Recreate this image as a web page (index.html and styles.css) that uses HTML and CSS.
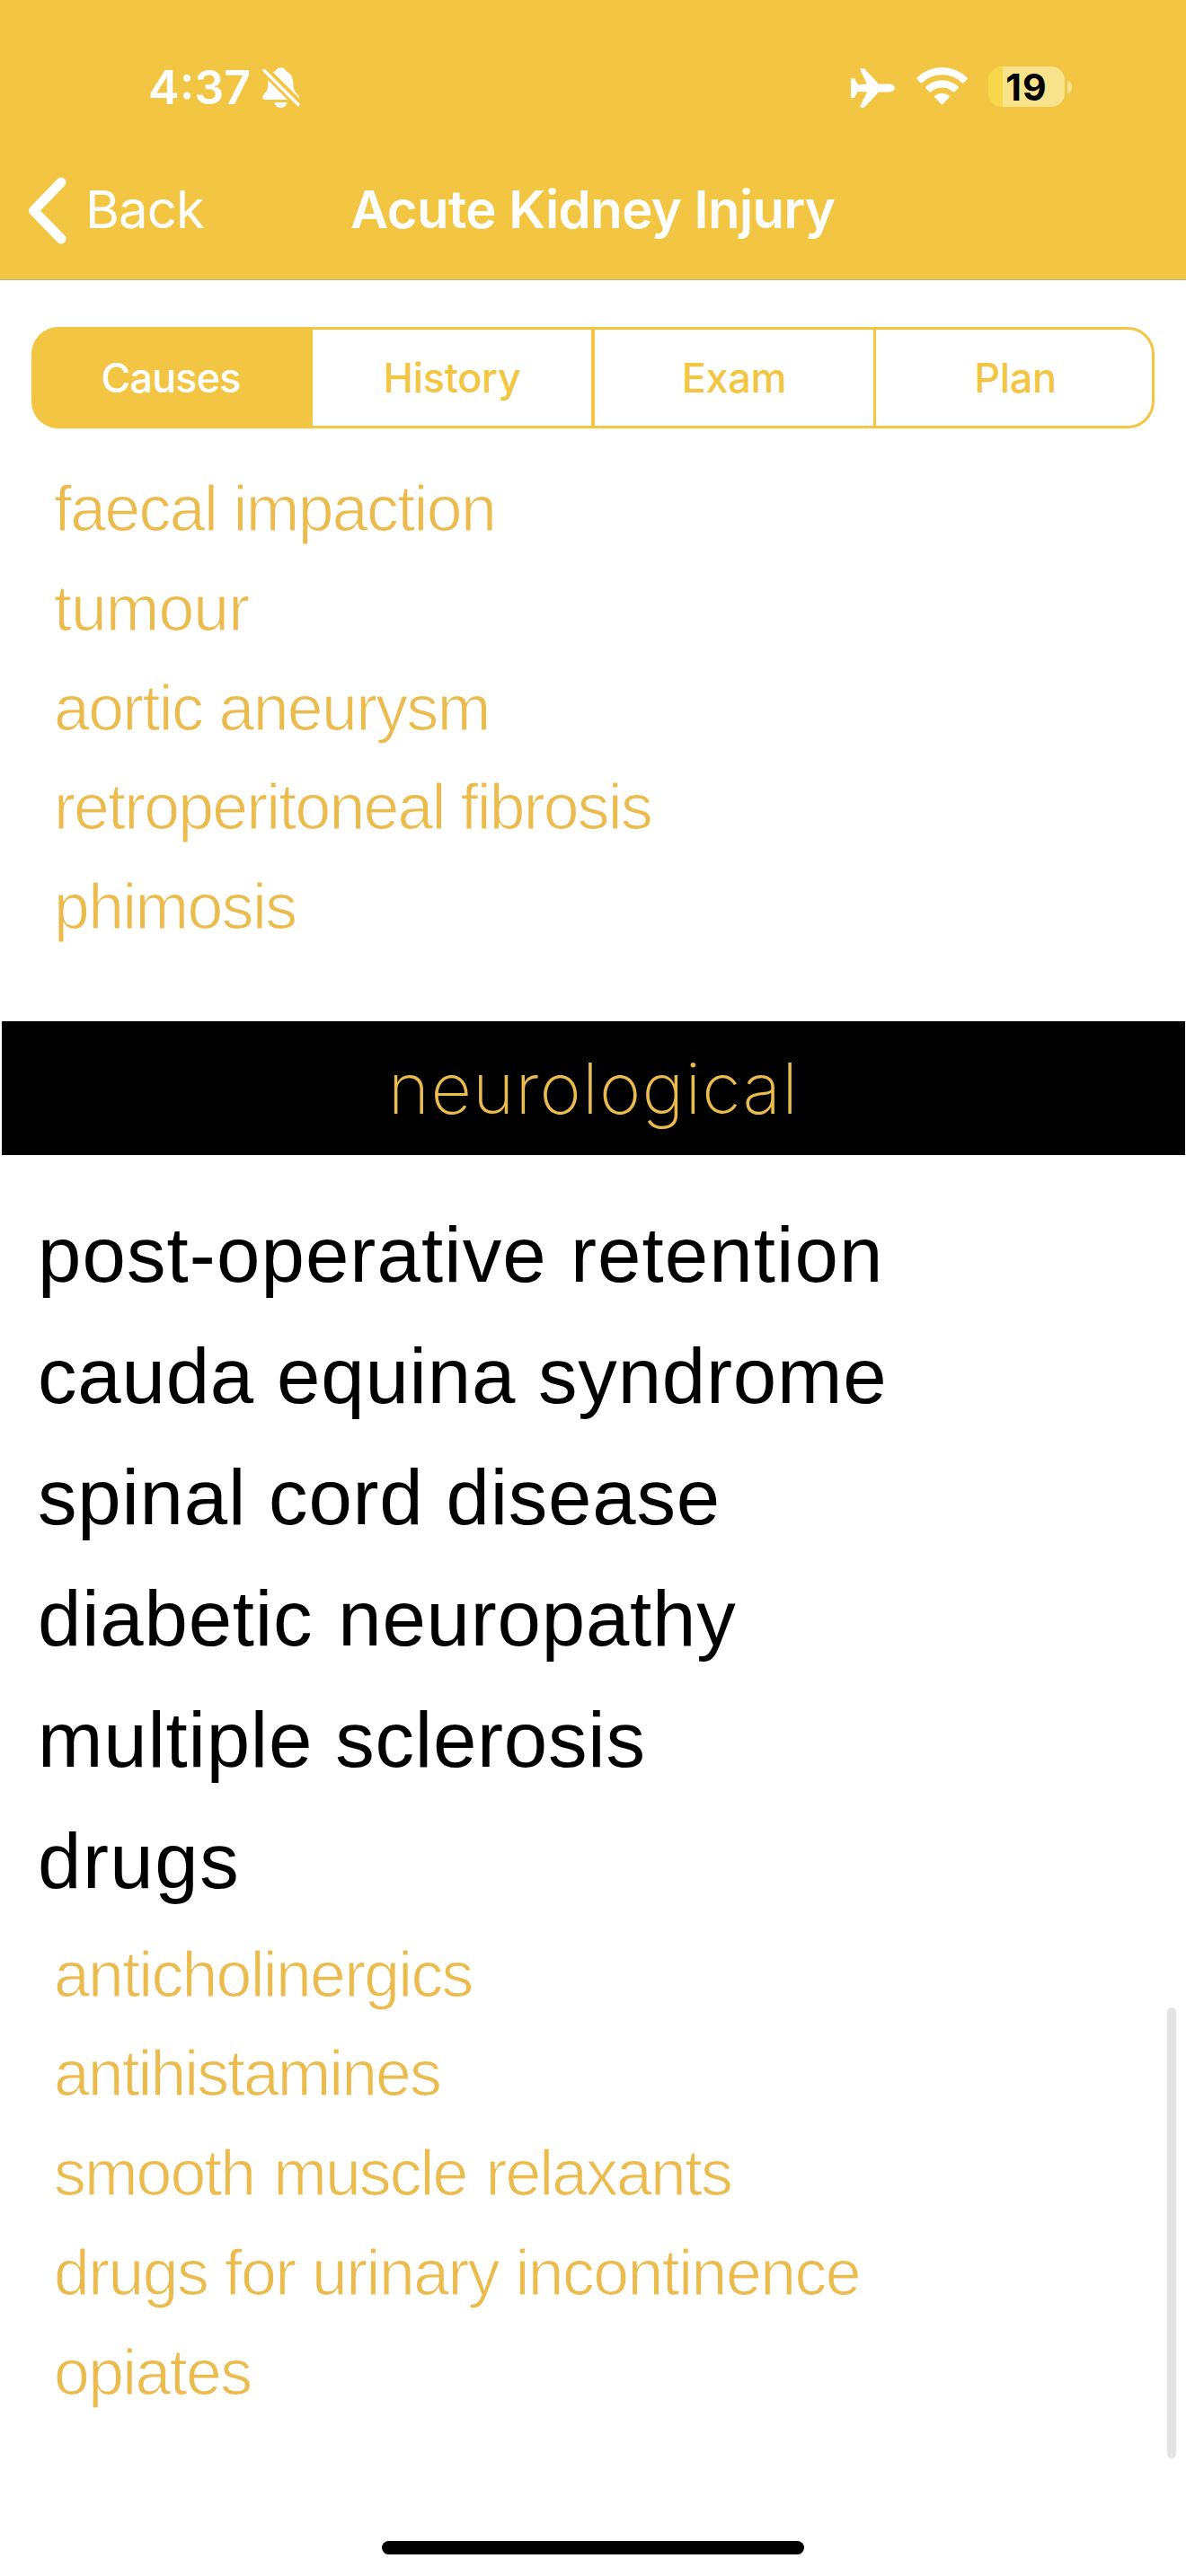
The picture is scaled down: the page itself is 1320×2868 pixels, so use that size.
FILE: index.html
```html
<!DOCTYPE html>
<html lang="en">
<head>
<meta charset="utf-8">
<title>Acute Kidney Injury</title>
<link rel="stylesheet" href="styles.css">
</head>
<body>
<header class="header">
  <div class="status">
    <div class="status-left">
      <span class="time">4:37</span>
      <svg class="bell" viewBox="0 0 42 45" width="42" height="45" aria-hidden="true">
        <path fill="#fff" d="M12 5.5C14 4.8 15 3.5 15.600 2.600C16.800 1 18.500 .2 20.500 .2S24.200 1 25.400 2.600C26.200 3.900 27 4.700 28.500 5.500C32.500 8 34 12.500 34.300 17.500C34.600 23 35 25.500 37.500 28.500C39.500 30.800 41.200 32 41.200 34.300L41 34.600Z"/>
        <path fill="#fff" d="M6.500 14.500L28 36H3.500C1.400 36 .3 35 .3 33.200C.3 31 2.500 29.500 4 27.500C6 25 6.300 21 6.500 14.500Z"/>
        <path fill="#fff" d="M13.500 39H27.500C27 42.500 24.200 44.800 20.500 44.800S14 42.500 13.500 39Z"/>
        <path stroke="#fff" stroke-width="3.400" stroke-linecap="round" d="M2 3.500L40 41.500"/>
      </svg>
    </div>
    <div class="status-right">
      <svg class="plane" viewBox="0 0 49 44" width="49" height="44" aria-hidden="true">
        <path fill="#fff" d="M0 11.500Q0 11 .6 11H2.800Q3.700 11 4.300 11.900L8 18.200L18 17.600L10.500 2Q9.800 .3 11.600 .3H14Q15 .3 15.800 1.200L31 17.600H41.500C46 17.600 48.900 19.700 48.900 22S46 26.500 41.500 26.500H31L15.800 42.800Q15 43.700 14 43.700H11.600Q9.800 43.700 10.500 42L18 26.500L8 25.800L4.300 32.100Q3.700 33 2.800 33H.6Q0 33 0 32.500Z"/>
      </svg>
      <svg class="wifi" viewBox="0 0 57 42" width="57" height="42" aria-hidden="true">
        <path fill="#fff" d="M.6 11.600A39.500 39.500 0 0 1 56.400 11.600Q57.200 12.400 56.400 13.200L52.400 17.200Q51.600 17.900 50.800 17.200A32.200 32.200 0 0 0 6.200 17.200Q5.400 17.900 4.600 17.200L.6 13.200Q-.2 12.400 .6 11.600Z"/>
        <path fill="#fff" d="M10.400 21.600A26 26 0 0 1 46.600 21.600Q47.300 22.400 46.600 23.200L42.400 27.300Q41.600 28 40.800 27.300A18.400 18.400 0 0 0 16.200 27.300Q15.400 28 14.600 27.300L10.400 23.200Q9.700 22.400 10.400 21.600Z"/>
        <path fill="#fff" d="M20.300 31.800A12.500 12.500 0 0 1 36.700 31.800Q37.400 32.500 36.700 33.300L29.300 40.900Q28.500 41.700 27.700 40.900L20.300 33.300Q19.600 32.500 20.300 31.800Z"/>
      </svg>
      <div class="battery"><span>19</span></div>
      <div class="battery-tip"></div>
    </div>
  </div>
  <nav class="navbar">
    <a class="back">
      <svg viewBox="0 0 44 76" width="44" height="76" aria-hidden="true"><path fill="none" stroke="#fff" stroke-width="11" stroke-linecap="round" stroke-linejoin="round" d="M38 7L7.500 38.500L38 70"/></svg>
      <span>Back</span>
    </a>
    <h1 class="title">Acute Kidney Injury</h1>
  </nav>
</header>
<div class="segments">
  <div class="segment selected">Causes</div>
  <div class="segment">History</div>
  <div class="segment">Exam</div>
  <div class="segment">Plan</div>
</div>
<main>
  <ul class="details obstructive">
    <li>faecal impaction</li>
    <li>tumour</li>
    <li>aortic aneurysm</li>
    <li>retroperitoneal fibrosis</li>
    <li>phimosis</li>
  </ul>
  <h2 class="section">neurological</h2>
  <ul class="causes">
    <li>post-operative retention</li>
    <li>cauda equina syndrome</li>
    <li>spinal cord disease</li>
    <li>diabetic neuropathy</li>
    <li>multiple sclerosis</li>
    <li>drugs</li>
  </ul>
  <ul class="details drugs">
    <li>anticholinergics</li>
    <li>antihistamines</li>
    <li>smooth muscle relaxants</li>
    <li>drugs for urinary incontinence</li>
    <li>opiates</li>
  </ul>
</main>
<div class="scrollbar"></div>
<div class="home-indicator"></div>
</body>
</html>
```
FILE: styles.css
```css
* { box-sizing: border-box; }
body {
  position: relative;
  margin: 0;
  width: 1320px;
  height: 2868px;
  overflow: hidden;
  background: #fff;
  font-family: "Liberation Sans", Arial, sans-serif;
}
ul, h1, h2 { margin: 0; padding: 0; list-style: none; font-weight: 400; }
svg { display: block; flex: none; }

/* Header */
.header {
  height: 312px;
  background: #f2c643;
  border-bottom: 1px solid #b3b0a6;
  color: #fff;
  font-family: Inter, sans-serif;
}
.status {
  display: flex;
  justify-content: space-between;
  height: 170px;
  padding: 74px 127px 0 165px;
}
.status-left, .status-right { display: flex; align-items: flex-start; }
.time { width: 127px; font-size: 52px; font-weight: 600; line-height: 48px; white-space: nowrap; }
.bell { margin-top: 1px; }
.plane { margin-top: 2px; }
.wifi { margin: 1px 0 0 24px; }
.battery {
  width: 85px;
  height: 45px;
  margin-left: 23px;
  border-radius: 15px;
  background: linear-gradient(90deg, #f7d84b 16px, #f8e28b 16px);
  color: #000;
  font-size: 41px;
  font-weight: 700;
  line-height: 46px;
  letter-spacing: 1px;
  text-align: center;
  white-space: nowrap;
}
.battery-tip { width: 5px; height: 14px; margin: 16px 0 0 3px; border-radius: 0 5px 5px 0 / 0 7px 7px 0; background: #f8e28b; }

.navbar { display: grid; grid-template-columns: 390px auto; align-items: center; height: 126px; }
.back { display: flex; align-items: center; padding-left: 30px; font-size: 58px; letter-spacing: -.9px; }
.back svg { margin-top: 2px; }
.back span { margin-left: 21px; font-weight: 380; }
.title { font-size: 58px; font-weight: 600; letter-spacing: -.55px; white-space: nowrap; }

/* Segmented control */
.segments { display: flex; width: 1250px; height: 113px; margin: 52px 0 0 35px; color: #f2c643; }
.segment {
  width: 313px;
  border: solid #f2c643;
  border-width: 3px 3px 3px 0;
  font: 500 45px/107px Inter, sans-serif;
  letter-spacing: -.3px;
  text-align: center;
}
.segment:nth-child(2) { width: 314px; border-right-width: 4px; }
.segment:last-child { width: 310px; padding-left: 3px; border-radius: 0 30px 30px 0; }
.segment.selected { border-radius: 30px 0 0 30px; background: #f2c643; color: #fff; letter-spacing: -.9px; }

/* Content lists */
.details { padding-left: 60px; color: #ecbb4e; font-size: 71.5px; line-height: 110.8px; letter-spacing: -1.6px; -webkit-text-stroke: 1.2px #fff; }
.obstructive { padding-top: 34px; }
.obstructive li:nth-child(2) { letter-spacing: -.9px; }
.obstructive li:nth-child(4) { letter-spacing: -1.77px; }
.drugs li:nth-child(1) { letter-spacing: -1.7px; }
.drugs li:nth-child(2) { letter-spacing: -1.95px; }
.drugs li:nth-child(3) { letter-spacing: -1.87px; word-spacing: 3px; }
.drugs li:nth-child(4) { letter-spacing: -1.5px; }
.section {
  height: 149px;
  margin: 72px 1px 0 2px;
  background: #000;
  color: #ecbb4e;
  font: 180 79px/149px Inter, sans-serif;
  letter-spacing: 1.2px;
  text-align: center;
}
.causes { margin-top: 43px; padding-left: 42px; color: #000; font-size: 87px; line-height: 135.1px; letter-spacing: .8px; }
.causes li:nth-child(1) { letter-spacing: 1.1px; word-spacing: 1px; }
.causes li:nth-child(4) { letter-spacing: .8px; word-spacing: 3px; }
.causes li:nth-child(6) { letter-spacing: 1.5px; }
.drugs { padding-top: 3px; }

/* Overlays */
.scrollbar { position: absolute; left: 1299px; top: 2235px; width: 10px; height: 502px; border-radius: 5px; background: #e3e3e3; }
.home-indicator { position: absolute; left: 425px; top: 2829px; width: 470px; height: 15px; border-radius: 8px; background: #000; }
```
